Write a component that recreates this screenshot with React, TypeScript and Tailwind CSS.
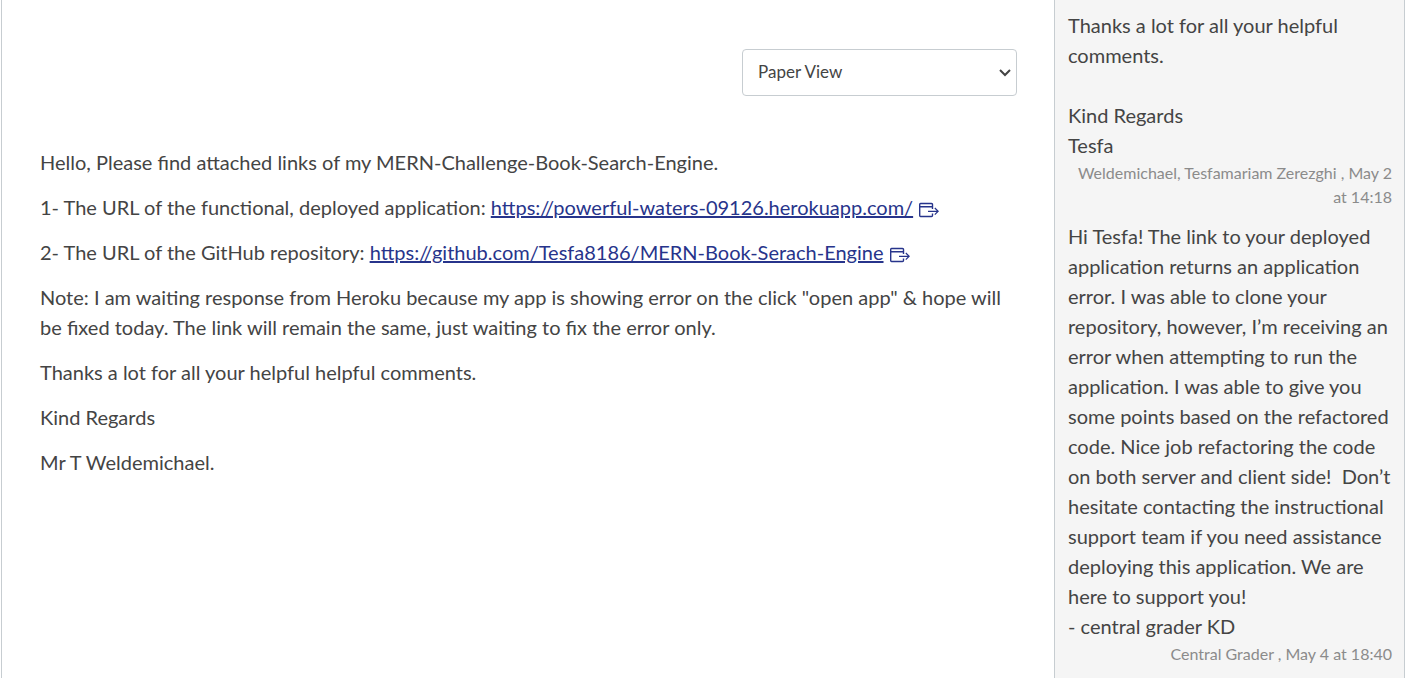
import React from "react";

function ExternalIcon() {
  return (
    <svg viewBox="0 0 20 16" fill="none" stroke="currentColor" strokeWidth="1.4" className="ml-1.5 inline-block h-4 w-5 align-middle" aria-hidden="true">
      <path d="M13.5 7V2.5Q13.5 1.5 12.5 1.5H1.5Q.7 1.5.7 2.5v11q0 1 .8 1h11q1 0 1-1V11.5M.7 4.7h12.8" />
      <path strokeWidth="1.2" d="M9 9.3h10.2M15.8 6 19.2 9.3 15.8 12.6" />
    </svg>
  );
}

function DocLink({ href }: { href: string }) {
  return (
    <a href={href} className="text-[#27348b]">
      <span className="underline">{href}</span>
      <ExternalIcon />
    </a>
  );
}

export default function App() {
  return (
    <div className="ml-px flex min-h-screen border-l border-[#c7cdd1] bg-white font-['Lato',sans-serif] text-xl leading-[30px] text-[#444444]">
      <main className="min-w-0 flex-1 pr-[37px] pl-[38px] pt-[49px]">
        <div className="flex justify-end">
          <div className="relative w-[275px]">
            <select aria-label="View" className="h-[47px] w-full appearance-none rounded border border-[#c7cdd1] bg-white px-[15px] pb-0.5 text-[17px]">
              <option>Paper View</option>
            </select>
            <svg viewBox="0 0 12 8" fill="none" stroke="currentColor" strokeWidth="2" className="pointer-events-none absolute top-5 right-1.5 h-2 w-3" aria-hidden="true">
              <path d="m1 1 5 5 5-5" />
            </svg>
          </div>
        </div>
        <div className="mt-[51px] space-y-[15px]">
          <p>Hello, Please find attached links of my MERN-Challenge-Book-Search-Engine.</p>
          <p>1- The URL of the functional, deployed application: <DocLink href="https://powerful-waters-09126.herokuapp.com/" /></p>
          <p>2- The URL of the GitHub repository: <DocLink href="https://github.com/Tesfa8186/MERN-Book-Serach-Engine" /></p>
          <p>Note: I am waiting response from Heroku because my app is showing error on the click "open app" &amp; hope will be fixed today. The link will remain the same, just waiting to fix the error only.</p>
          <p>Thanks a lot for all your helpful helpful comments.</p>
          <p>Kind Regards</p>
          <p>Mr T Weldemichael.</p>
        </div>
      </main>
      <aside className="mr-[5px] w-[351px] shrink-0 border-x border-[#c7cdd1] bg-[#f5f5f5] pr-3 pl-[13px] pt-2.5">
        <article>
          <p>Thanks a lot for all your helpful comments.</p>
          <p className="mt-[30px]">Kind Regards<br />Tesfa</p>
          <footer className="pt-px text-right text-base leading-6 text-[#8b8b8b]">Weldemichael, Tesfamariam Zerezghi , May 2 at 14:18</footer>
        </article>
        <article className="mt-3">
          <p>Hi Tesfa! The link to your deployed application returns an application error. I was able to clone your repository, however, I’m receiving an error when attempting to run the application. I was able to give you some points based on the refactored code. Nice job refactoring the code on both server and client side!&nbsp; Don’t hesitate contacting the instructional support team if you need assistance deploying this application. We are here to support you!<br />- central grader KD</p>
          <footer className="pt-px text-right text-base leading-6 text-[#8b8b8b]">Central Grader , May 4 at 18:40</footer>
        </article>
      </aside>
    </div>
  );
}
